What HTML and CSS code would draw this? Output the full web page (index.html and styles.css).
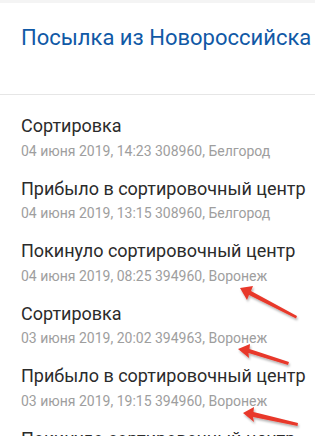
FILE: index.html
```html
<!DOCTYPE html>
<html lang="ru">
<head>
    <meta charset="UTF-8">
    <meta name="viewport" content="width=device-width, initial-scale=1.0">
    <title>Посылка из Новороссийска</title>
    <link rel="stylesheet" href="styles.css">
</head>
<body>
    <div class="page">
        <header class="header">
            <h1 class="header-title">Посылка из Новороссийска</h1>
        </header>

        <ul class="events">
            <li class="event">
                <div class="event-name">Сортировка</div>
                <div class="event-info">04 июня 2019, 14:23 308960, Белгород</div>
            </li>
            <li class="event">
                <div class="event-name">Прибыло в сортировочный центр</div>
                <div class="event-info">04 июня 2019, 13:15 308960, Белгород</div>
            </li>
            <li class="event">
                <div class="event-name">Покинуло сортировочный центр</div>
                <div class="event-info">04 июня 2019, 08:25 394960, Воронеж</div>
            </li>
            <li class="event">
                <div class="event-name">Сортировка</div>
                <div class="event-info">03 июня 2019, 20:02 394963, Воронеж</div>
            </li>
            <li class="event">
                <div class="event-name">Прибыло в сортировочный центр</div>
                <div class="event-info">03 июня 2019, 19:15 394960, Воронеж</div>
            </li>
            <li class="event">
                <div class="event-name">Покинуло сортировочный центр</div>
                <div class="event-info">03 июня 2019, 08:25 394960, Новороссийск</div>
            </li>
        </ul>

        <!-- пометки поверх скриншота -->
        <svg class="marks" width="315" height="436" viewBox="0 0 315 436">
            <defs>
                <filter id="shadow" x="-20%" y="-50%" width="140%" height="200%">
                    <feDropShadow dx="1" dy="2" stdDeviation="1" flood-color="#000" flood-opacity="0.3"/>
                </filter>
            </defs>
            <g fill="#e8392b" filter="url(#shadow)">
                <path d="M240 288 L253 286 L251 291 L297 316 L296 318.5 L249 295 L247 300 Z"/>
                <path d="M238 349 L250 344 L249.5 349 L289 362 L288 365 L248.5 353 L249 358 Z"/>
                <path d="M243 413 L254 407 L253.5 412 L298 423 L297.5 426 L253 417 L254 422 Z"/>
            </g>
        </svg>
    </div>
</body>
</html>
```

FILE: styles.css
```css
body {
    margin: 0;
    background: #fff;
    font-family: Roboto, "Noto Sans", sans-serif;
}
.page {
    position: relative;
    width: 315px;
    height: 436px;
    overflow: hidden;
}
.header {
    border-top: 3px solid #f4f4f4;
    border-bottom: 1px solid #e6e6e6;
    padding: 0 21px;
    box-sizing: border-box;
    height: 95px;
}
.header-title {
    margin: 0;
    padding-top: 22px;
    font-size: 22px;
    line-height: 26px;
    font-weight: 400;
    color: #1059a6;
    white-space: nowrap;
}
.events {
    list-style: none;
    margin: 0;
    padding: 20px 21px 0;
}
.event {
    height: 62.6px;
}
.event-name {
    font-size: 18px;
    line-height: 22px;
    color: #2b2b2b;
    white-space: nowrap;
}
.event-info {
    margin-top: 4.5px;
    font-size: 14px;
    line-height: 18px;
    color: #9e9e9e;
    white-space: nowrap;
}
.marks {
    position: absolute;
    left: 0;
    top: 0;
}
```
